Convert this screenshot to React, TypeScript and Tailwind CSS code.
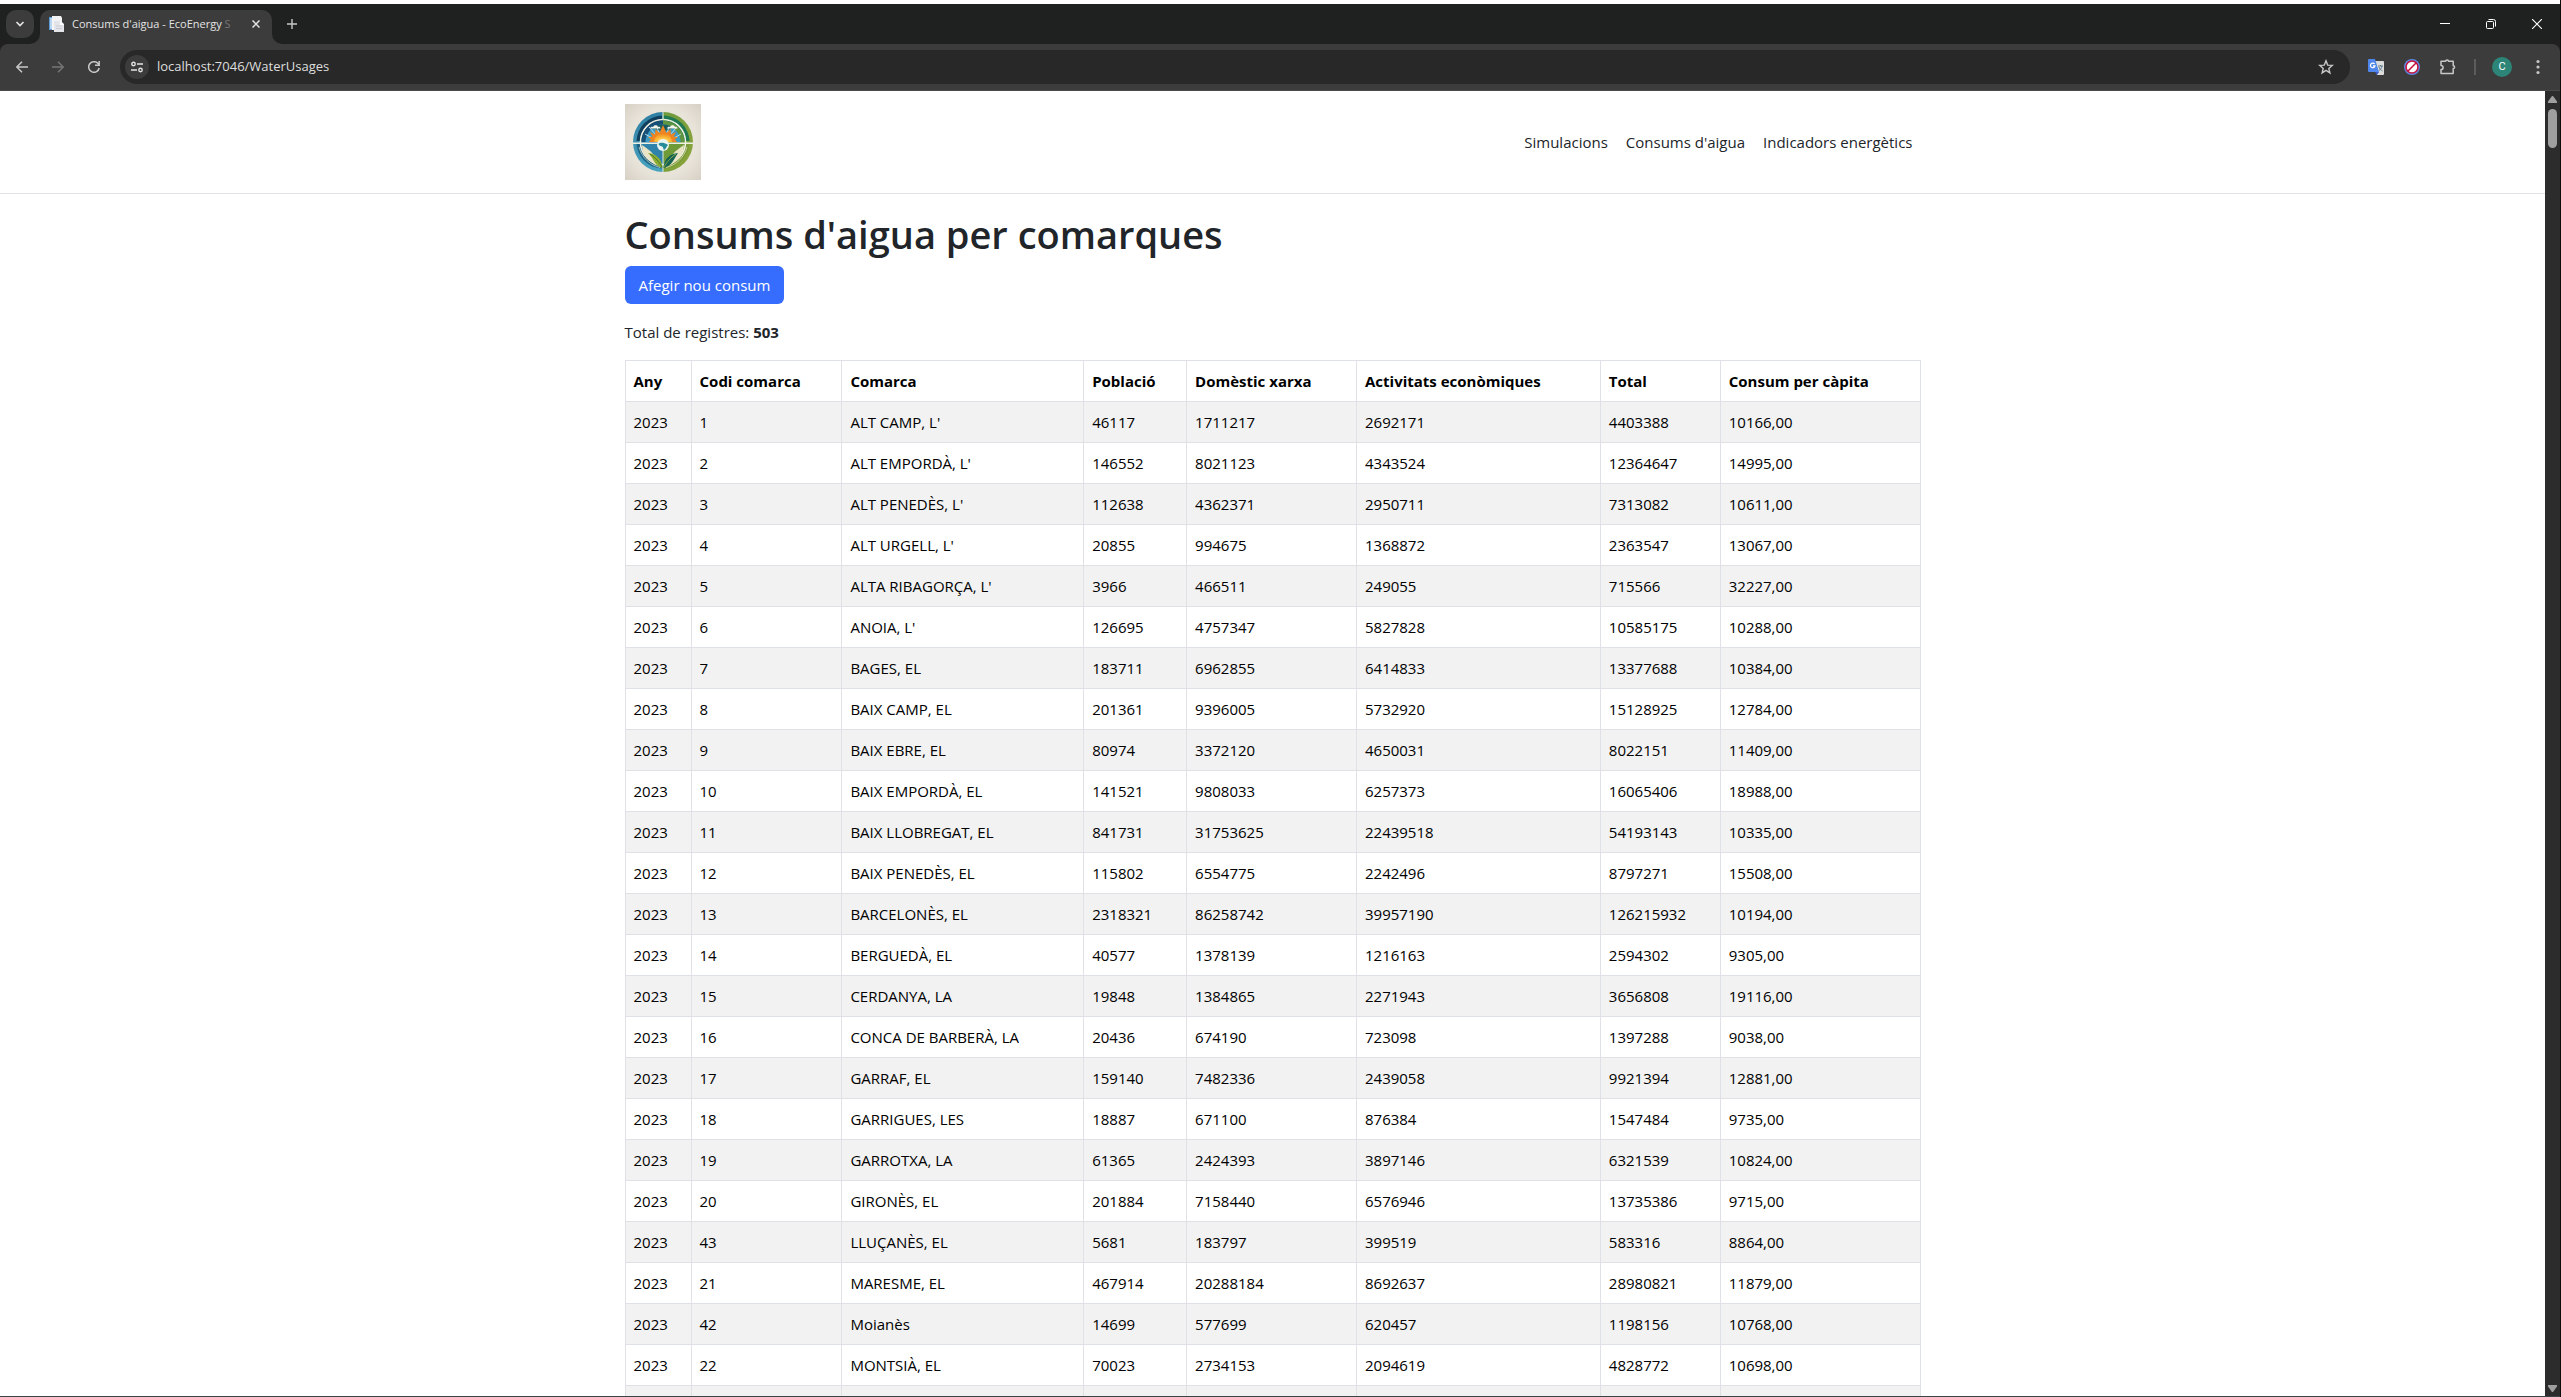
import React from 'react';

type Row = [string, string, string, string, string, string, string, string];

const headings = ['Any', 'Codi comarca', 'Comarca', 'Població', 'Domèstic xarxa', 'Activitats econòmiques', 'Total', 'Consum per càpita'];

const rows: Row[] = [
  ['2023', '1', "ALT CAMP, L'", '46117', '1711217', '2692171', '4403388', '10166,00'],
  ['2023', '2', "ALT EMPORDÀ, L'", '146552', '8021123', '4343524', '12364647', '14995,00'],
  ['2023', '3', "ALT PENEDÈS, L'", '112638', '4362371', '2950711', '7313082', '10611,00'],
  ['2023', '4', "ALT URGELL, L'", '20855', '994675', '1368872', '2363547', '13067,00'],
  ['2023', '5', "ALTA RIBAGORÇA, L'", '3966', '466511', '249055', '715566', '32227,00'],
  ['2023', '6', "ANOIA, L'", '126695', '4757347', '5827828', '10585175', '10288,00'],
  ['2023', '7', 'BAGES, EL', '183711', '6962855', '6414833', '13377688', '10384,00'],
  ['2023', '8', 'BAIX CAMP, EL', '201361', '9396005', '5732920', '15128925', '12784,00'],
  ['2023', '9', 'BAIX EBRE, EL', '80974', '3372120', '4650031', '8022151', '11409,00'],
  ['2023', '10', 'BAIX EMPORDÀ, EL', '141521', '9808033', '6257373', '16065406', '18988,00'],
  ['2023', '11', 'BAIX LLOBREGAT, EL', '841731', '31753625', '22439518', '54193143', '10335,00'],
  ['2023', '12', 'BAIX PENEDÈS, EL', '115802', '6554775', '2242496', '8797271', '15508,00'],
  ['2023', '13', 'BARCELONÈS, EL', '2318321', '86258742', '39957190', '126215932', '10194,00'],
  ['2023', '14', 'BERGUEDÀ, EL', '40577', '1378139', '1216163', '2594302', '9305,00'],
  ['2023', '15', 'CERDANYA, LA', '19848', '1384865', '2271943', '3656808', '19116,00'],
  ['2023', '16', 'CONCA DE BARBERÀ, LA', '20436', '674190', '723098', '1397288', '9038,00'],
  ['2023', '17', 'GARRAF, EL', '159140', '7482336', '2439058', '9921394', '12881,00'],
  ['2023', '18', 'GARRIGUES, LES', '18887', '671100', '876384', '1547484', '9735,00'],
  ['2023', '19', 'GARROTXA, LA', '61365', '2424393', '3897146', '6321539', '10824,00'],
  ['2023', '20', 'GIRONÈS, EL', '201884', '7158440', '6576946', '13735386', '9715,00'],
  ['2023', '43', 'LLUÇANÈS, EL', '5681', '183797', '399519', '583316', '8864,00'],
  ['2023', '21', 'MARESME, EL', '467914', '20288184', '8692637', '28980821', '11879,00'],
  ['2023', '42', 'Moianès', '14699', '577699', '620457', '1198156', '10768,00'],
  ['2023', '22', 'MONTSIÀ, EL', '70023', '2734153', '2094619', '4828772', '10698,00'],
  ['', '', '', '', '', '', '', ''],
];

function Logo() {
  return (
    <svg viewBox="0 0 76 76" className="size-[76px]" role="img" aria-label="EcoEnergy">
      <defs>
        <radialGradient id="paper" cx="50%" cy="50%" r="75%">
          <stop offset="0" stopColor="#f1ede4" />
          <stop offset=".6" stopColor="#e8e3d9" />
          <stop offset="1" stopColor="#d3ccc1" />
        </radialGradient>
        <radialGradient id="sun" cx="50%" cy="90%" r="90%">
          <stop offset="0" stopColor="#fff6c8" />
          <stop offset=".4" stopColor="#fdbf3b" />
          <stop offset="1" stopColor="#ee7d1c" />
        </radialGradient>
        <linearGradient id="rimL" x1="0" y1="0" x2="0" y2="1">
          <stop offset="0" stopColor="#2f7fa3" />
          <stop offset="1" stopColor="#49a3bf" />
        </linearGradient>
        <linearGradient id="rimR" x1="0" y1="0" x2="1" y2="1">
          <stop offset="0" stopColor="#6d9a3c" />
          <stop offset="1" stopColor="#8ea63a" />
        </linearGradient>
      </defs>
      <rect width="76" height="76" fill="url(#paper)" />
      <path d="M38 8a30 30 0 0 0 0 60z" fill="url(#rimL)" />
      <path d="M38 8a30 30 0 0 1 0 60z" fill="url(#rimR)" />
      <path d="M37 11.500A26.500 26.500 0 0 0 11.500 37H37z" fill="#0f3f5c" />
      <path d="M39 11.500A26.500 26.500 0 0 1 64.500 37H39z" fill="#1f7a54" />
      <path d="M37 64.500A26.500 26.500 0 0 1 11.500 39H37z" fill="#1c6287" />
      <path d="M39 64.500A26.500 26.500 0 0 0 64.500 39H39z" fill="#7c9a35" />
      <circle cx="38" cy="38" r="22.500" fill="none" stroke="#eef0e4" strokeWidth="1.600" />
      <path d="M38 16.500a21.500 21.500 0 0 0-21.500 21.500H38z" fill="#164f78" />
      <path d="M38 16.500A21.500 21.500 0 0 1 59.500 38H38z" fill="#5f9440" />
      <path d="M38 59.500A21.500 21.500 0 0 1 16.500 38H38z" fill="#2f83aa" />
      <path d="M38 59.500A21.500 21.500 0 0 0 59.500 38H38z" fill="#6f9a38" />
      <path d="M20.500 38a17.500 17.500 0 0 1 35 0z" fill="#3c9cc6" />
      <path d="M27 24.500a17.500 17.500 0 0 1 22 0c-3 0-5 1-7 2h-8c-2-1-4-2-7-2z" fill="#1b5d5d" />
      <path d="M29 35l-9-5M31 31l-7-8M45 31l7-8M47 35l9-5M34 29l-2-6M42 29l2-6" stroke="#bfe4ef" strokeWidth=".9" />
      <path d="M24 38l2-2.500-3-2.500 4.500-.2-2.500-4.800 5 2.500.5-5.500 4 4 3.500-8 3.500 8 4-4 .5 5.500 5-2.500-2.500 4.800 4.500.2-3 2.500 2 2.500z" fill="#ee8422" />
      <path d="M29 38a9 9 0 0 1 18 0z" fill="url(#sun)" />
      <path d="M25 24.500c.5-2 2-2 3-1.500 1-2.500 4.500-2 5 0 1.500-.5 2.500.3 2.500 1.500zM42 24.500c.5-2 2-2 3-1.500 1-2.500 4.500-2 5 0 1.500-.5 2.500.3 2.500 1.500z" fill="#f3f4ec" />
      <path d="M8 39.300h60" stroke="#eef0e4" strokeWidth="1.400" />
      <path d="M38 8v8M38 46v22" stroke="#c9dcd4" strokeWidth="1.200" />
      <circle cx="38" cy="41" r="6" fill="#eaf4f0" />
      <path d="M33.500 40c2-2 5-1 8 0l1.500 1c-2 2-2 4-4 5-1-1-.5-3-2-3.500s-3-1-3.500-2.500z" fill="#278c99" />
      <path d="M17 41c4 3 8 5 11 9s8 6 9 13C27 61 17 53 17 41zM59 41c-4 3-8 5-11 9s-8 6-9 13C49 61 59 53 59 41z" fill="#e9e4c6" />
      <path d="M23 49c8 1 13.500 5 14.500 15C29 62 29 54 23 49z" fill="#8cae34" />
      <path d="M25 50c6 4 9 8 12 13" stroke="#4a7927" fill="none" />
      <path d="M53 49c-8 1-13.500 5-14.500 15C47 62 49 55 53 49z" fill="#166353" />
      <path d="M51 50c-6 4-9 8-12 13" stroke="#9dbb4d" fill="none" strokeWidth=".8" />
      <path d="M14 43c3 11 11 18 21 20.500M62 43c-3 11-11 18-21 20.500" fill="none" stroke="#dce6c8" strokeWidth=".7" />
    </svg>
  );
}

function TabStrip() {
  return (
    <div className="flex h-10 shrink-0 items-end bg-[#1f2120] pl-1.5 text-[#e3e3e3]">
      <button aria-label="Cerca pestanyes" className="mb-1.5 flex size-7 items-center justify-center rounded-[10px] bg-[#3c3c3c]">
        <svg viewBox="0 0 10 10" className="size-2.5" fill="none" stroke="currentColor" strokeWidth="1.7"><path d="M1.500 3l3.500 3.500L8.500 3" /></svg>
      </button>
      <div className="relative ml-1.5 flex h-[34px] w-[232px] items-center rounded-t-[10px] bg-[#3c3c3c] pb-1.5 pl-2 pr-2">
        <svg viewBox="0 0 10 10" className="absolute -left-2.5 bottom-0 size-2.5" fill="#3c3c3c"><path d="M10 0v10H0A10 10 0 0 0 10 0z" /></svg>
        <svg viewBox="0 0 10 10" className="absolute -right-2.5 bottom-0 size-2.5" fill="#3c3c3c"><path d="M0 0v10h10A10 10 0 0 1 0 0z" /></svg>
        <svg viewBox="0 0 16 16" className="size-4 shrink-0">
          <path d="M1 1h4v13H1z" fill="#5b9bd5" />
          <path d="M2 2h2v11H2z" fill="#b9d7f0" />
          <path d="M4 0h9l1 2v12H4z" fill="#f4f4f6" />
          <path d="M6 5h7l3 3v8H6z" fill="#e3e5ea" />
          <path d="M12 5v4h4z" fill="#fff" />
          <path d="M8 10h6M8 12.500h6" stroke="#c9ccd4" />
        </svg>
        <span className="ml-2 whitespace-nowrap text-[11px] leading-4">
          Consums d'aigua - EcoEnergy <span className="text-[#747474]">S</span>
        </span>
        <button aria-label="Tanca la pestanya" className="ml-auto flex size-4 shrink-0 items-center justify-center">
          <svg viewBox="0 0 8 8" className="size-2" stroke="currentColor" strokeWidth="1.500"><path d="M.5.5l7 7M7.500.5l-7 7" /></svg>
        </button>
      </div>
      <button aria-label="Pestanya nova" className="mb-1.5 ml-1.5 flex size-7 items-center justify-center">
        <svg viewBox="0 0 10 10" className="size-2.5" stroke="#c7c7c7" strokeWidth="1.400"><path d="M5 0v10M0 5h10" /></svg>
      </button>
      <div className="ml-auto flex h-10 text-white">
        <button aria-label="Minimitza" className="flex w-[46px] items-center justify-center">
          <svg viewBox="0 0 10 10" className="size-2.5" stroke="currentColor"><path d="M0 4.500h10" /></svg>
        </button>
        <button aria-label="Restaura" className="flex w-[46px] items-center justify-center">
          <svg viewBox="0 0 10 10" className="size-2.5" fill="none" stroke="currentColor"><rect x=".5" y="2.500" width="7" height="7" rx="1" /><path d="M2.500.5h5a2 2 0 0 1 2 2v5" /></svg>
        </button>
        <button aria-label="Tanca" className="flex w-[46px] items-center justify-center">
          <svg viewBox="0 0 10 10" className="size-2.5" stroke="currentColor" strokeWidth="1.100"><path d="M0 0l10 10M10 0L0 10" /></svg>
        </button>
      </div>
    </div>
  );
}

function Toolbar() {
  return (
    <div className="shrink-0 bg-[#1f2120]">
      <div className="flex h-[47px] items-center rounded-t-lg border-b border-[#4b4b4b] bg-[#3c3c3c] pl-2 pr-1 text-[#c7c7c7]">
        <div className="flex gap-2">
          <button aria-label="Enrere" className="flex size-7 items-center justify-center">
            <svg viewBox="0 0 12 12" className="size-3" fill="none" stroke="currentColor" strokeWidth="1.500"><path d="M12 6H1M6 .7L.8 6 6 11.300" /></svg>
          </button>
          <button aria-label="Endavant" className="flex size-7 items-center justify-center text-[#757575]">
            <svg viewBox="0 0 12 12" className="size-3" fill="none" stroke="currentColor" strokeWidth="1.500"><path d="M0 6h11M6 .7L11.200 6 6 11.300" /></svg>
          </button>
          <button aria-label="Torna a carregar" className="flex size-7 items-center justify-center">
            <svg viewBox="0 0 12 12" className="size-3" fill="none" stroke="currentColor" strokeWidth="1.500"><path d="M11.200 7A5.300 5.300 0 1 1 9.800 2.300L11 3.500M11.200 0v4.300H7" /></svg>
          </button>
        </div>
        <div className="ml-3 flex h-[34px] grow items-center rounded-full bg-[#282828] pl-[5px] pr-4">
          <button aria-label="Informació del lloc" className="flex size-6 items-center justify-center rounded-full bg-[#3c3c3c]">
            <svg viewBox="0 0 12 12" className="size-3" fill="none" stroke="#e3e3e3" strokeWidth="1.400"><circle cx="2.500" cy="3" r="1.700" /><path d="M6 3h6M0 9h6" /><circle cx="9.500" cy="9" r="1.700" /></svg>
          </button>
          <input aria-label="Adreça" readOnly value="localhost:7046/WaterUsages" className="ml-2 grow bg-transparent text-[13px] text-[#dedede] outline-none" />
          <button aria-label="Afegeix a preferits">
            <svg viewBox="0 0 16 16" className="size-4" fill="none" stroke="currentColor" strokeWidth="1.400"><path d="M8 1.800l1.700 4.300 4.600.3-3.500 3 1.100 4.500L8 11.400l-3.900 2.500 1.100-4.500-3.500-3 4.600-.3z" /></svg>
          </button>
        </div>
        <div className="ml-2 flex items-center">
          <button aria-label="Traductor" className="flex w-9 justify-center">
            <svg viewBox="0 0 16 16" className="size-4">
              <path d="M6 2h9a1 1 0 0 1 1 1v12a1 1 0 0 1-1 1H9z" fill="#dcdcdc" />
              <path d="M1 0h6l4 13H1a1 1 0 0 1-1-1V1a1 1 0 0 1 1-1z" fill="#4f86ec" />
              <path d="M7 13h4l-2 3z" fill="#3a57c4" />
              <path d="M6.600 5A2.300 2.300 0 1 0 7 6.800H4.900" fill="none" stroke="#fff" strokeWidth="1.200" />
              <path d="M10 7h5M12.500 6v1M14 7c-.5 2.500-2 4-3 4.500M11 8c.5 2 2 3 3.500 4" fill="none" stroke="#607d8b" />
            </svg>
          </button>
          <button aria-label="Bloquejador" className="flex w-9 justify-center">
            <svg viewBox="0 0 16 16" className="size-4"><circle cx="8" cy="8" r="8" fill="#5b8def" /><circle cx="8" cy="8" r="6" fill="#fff" stroke="#c4143c" strokeWidth="1.600" /><path d="M4 12l8-8" stroke="#c4143c" strokeWidth="1.600" /></svg>
          </button>
          <button aria-label="Extensions" className="flex w-9 justify-center">
            <svg viewBox="0 0 16 16" className="size-4" fill="none" stroke="currentColor" strokeWidth="1.500" strokeLinejoin="round"><path d="M1 2.300h4.700a1.400 1.400 0 0 1 2.800 0h4.700v4.500a1.400 1.400 0 0 1 0 2.800v5H1v-4a2.100 2.100 0 0 0 0-4.200z" /></svg>
          </button>
          <span className="mx-2 h-4 w-0.5 bg-[#5c5c5c]" />
          <button aria-label="Perfil" className="flex w-9 justify-center">
            <span className="flex size-5 items-center justify-center rounded-full bg-[#2c8577] font-[Roboto] text-[11px] text-white">C</span>
          </button>
          <button aria-label="Menú" className="flex w-9 justify-center">
            <svg viewBox="0 0 4 16" className="h-4 w-1" fill="currentColor"><circle cx="2" cy="2.500" r="1.600" /><circle cx="2" cy="8" r="1.600" /><circle cx="2" cy="13.500" r="1.600" /></svg>
          </button>
        </div>
      </div>
    </div>
  );
}

function ScrollBar() {
  return (
    <div aria-hidden="true" className="flex w-[15px] shrink-0 flex-col items-center bg-[#2c2c2c] pb-1 pt-[5px]">
      <svg viewBox="0 0 9 7" className="h-[7px] w-[9px]" fill="#9f9f9f"><path d="M3.600.6a1.100 1.100 0 0 1 1.800 0L9 5.500V7H0V5.500z" /></svg>
      <div className="mt-1.5 h-[39px] w-[9px] rounded-full bg-[#9f9f9f]" />
      <svg viewBox="0 0 9 7" className="mt-auto h-[7px] w-[9px]" fill="#9f9f9f"><path d="M3.600 6.400a1.100 1.100 0 0 0 1.800 0L9 1.500V0H0v1.500z" /></svg>
    </div>
  );
}

export default function App() {
  return (
    <div className="flex h-screen bg-[#0c0c0c] font-['Open_Sans',sans-serif]">
      <div className="flex min-w-0 grow flex-col border-t-4 border-white">
        <TabStrip />
        <Toolbar />
        <div className="flex min-h-0 grow border-b border-[#3b424a]">
          <div className="min-w-0 grow overflow-hidden bg-white text-[15px] leading-6 text-[#212529]">
            <header className="mb-4 border-b border-[#dee2e6]">
              <nav className="mx-auto flex max-w-[1320px] items-center justify-between px-3 py-[13px]">
                <a href="#inici"><Logo /></a>
                <div className="flex gap-0.5">
                  <a href="#simulacions" className="p-2">Simulacions</a>
                  <a href="#consums" className="p-2">Consums d'aigua</a>
                  <a href="#indicadors" className="p-2">Indicadors energètics</a>
                </div>
              </nav>
            </header>
            <main className="mx-auto max-w-[1320px] px-3">
              <h1 className="mb-2 text-[38px] font-semibold leading-[48px]">Consums d'aigua per comarques</h1>
              <button className="block h-[38px] rounded-md bg-[#366dff] px-3.5 text-white">Afegir nou consum</button>
              <p className="my-4">Total de registres: <strong>503</strong></p>
              <table className="w-full table-fixed border-collapse text-left text-black">
                <colgroup>
                  <col className="w-[5.1%]" />
                  <col className="w-[11.65%]" />
                  <col className="w-[18.67%]" />
                  <col className="w-[7.95%]" />
                  <col className="w-[13.12%]" />
                  <col className="w-[18.83%]" />
                  <col className="w-[9.26%]" />
                  <col className="w-[15.42%]" />
                </colgroup>
                <thead>
                  <tr>
                    {headings.map((h) => (
                      <th key={h} scope="col" className="whitespace-nowrap border border-[#dee2e6] p-2 font-bold">{h}</th>
                    ))}
                  </tr>
                </thead>
                <tbody>
                  {rows.map((row, r) => (
                    <tr key={r} className="h-[41px] odd:bg-[#f2f2f2]">
                      {row.map((cell, c) => (
                        <td key={c} className="whitespace-nowrap border border-[#dee2e6] p-2">{cell}</td>
                      ))}
                    </tr>
                  ))}
                </tbody>
              </table>
            </main>
          </div>
          <ScrollBar />
        </div>
      </div>
      <div className="w-px shrink-0 bg-[#0c0c0c]" />
    </div>
  );
}
